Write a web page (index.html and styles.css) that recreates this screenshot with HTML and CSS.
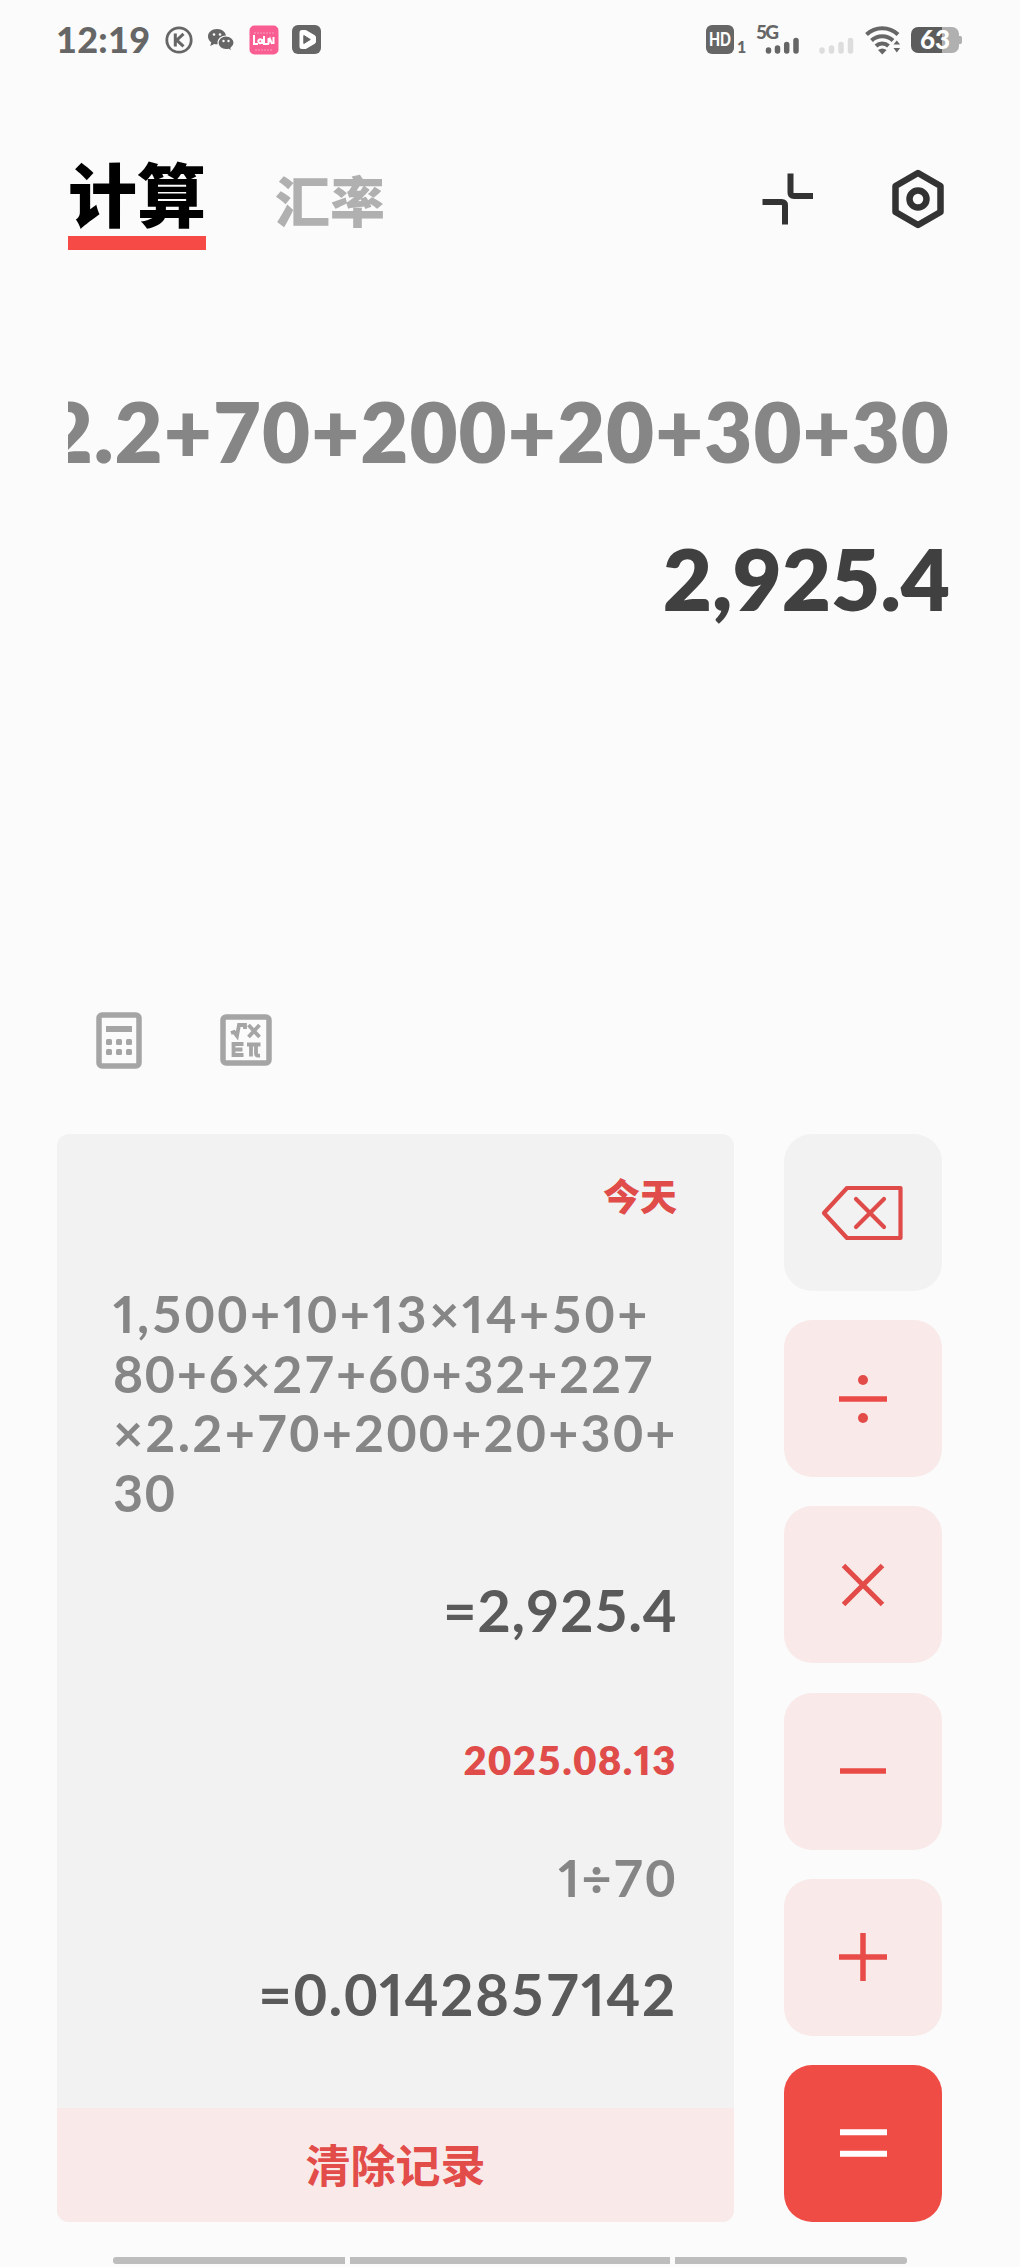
FILE: index.html
```html
<!DOCTYPE html>
<html lang="zh-CN">
<head>
  <meta charset="UTF-8">
  <title>计算</title>
  <link rel="stylesheet" href="styles.css">
</head>
<body>

  <div class="status">
    <span class="time">12:19</span>
    <svg class="icon-k" width="28" height="28" viewBox="0 0 28 28">
      <circle cx="14" cy="14" r="12.2" fill="none" stroke="#666" stroke-width="2.8"/>
      <path d="M10.3 7.5v13M18.5 7.8l-6.8 6.4 6.8 6.2" fill="none" stroke="#666" stroke-width="3"/>
    </svg>
    <svg class="icon-chat" width="28" height="28" viewBox="0 0 28 28">
      <path d="M10 3C4.800 3 1 6.300 1 10.500c0 2.400 1.300 4.400 3.200 5.800L3.300 20l4-2.100c.9.2 1.800.3 2.700.3C15.500 18 19 14.700 19 10.500S15.200 3 10 3z" fill="#666"/>
      <path d="M19 10c-4.500 0-8 3-8 6.800s3.500 6.800 8 6.800c.9 0 1.700-.1 2.500-.3l3.200 1.900-.8-3c1.900-1.300 3.200-3.200 3.200-5.400C27.100 13 23.500 10 19 10z" fill="#666" stroke="#fbfbfb" stroke-width="1.200"/>
      <g fill="#fbfbfb">
        <circle cx="7" cy="8.500" r="1.300"/><circle cx="13" cy="8.500" r="1.300"/>
        <circle cx="16.500" cy="15" r="1.200"/><circle cx="21.500" cy="15" r="1.200"/>
      </g>
    </svg>
    <svg class="icon-pink" width="30" height="30" viewBox="0 0 30 30">
      <rect x=".5" y=".5" width="29" height="29" rx="5" fill="#f95d92"/>
      <path d="M5 8h20M6 25h18" stroke="#fc9dbd" stroke-width="1.200" stroke-dasharray="2 1"/>
      <path d="M5 10v9h4M9.500 15.500a1.800 1.800 0 1 0 3.500 1.500 1.800 1.800 0 1 0-3.500-1.500M13.500 14v5M15 11v8h4l2-5 2 5M19.500 13v6M24.500 12v7" fill="none" stroke="#fff" stroke-width="2"/>
    </svg>
    <svg class="icon-play" width="29" height="29" viewBox="0 0 29 29">
      <rect width="29" height="29" rx="6" fill="#666"/>
      <path d="M10 7.500h3l8.500 5v4l-8.500 5h-3z" fill="#fff" stroke="#fff" stroke-width="5" stroke-linejoin="round"/>
      <path d="M11.800 10.500v8l6.500-4z" fill="#666" stroke="#666" stroke-linejoin="round"/>
    </svg>

    <div class="status-right">
      <svg width="38" height="30" viewBox="0 0 38 30">
        <rect width="28" height="29" rx="6" fill="#666"/>
        <text class="hd" x="14" y="20.500" text-anchor="middle" textLength="22" lengthAdjust="spacingAndGlyphs">HD</text>
        <text class="sim" x="31" y="28">1</text>
      </svg>
      <svg class="icon-5g" width="43" height="30" viewBox="0 0 43 30">
        <text class="net" x="-1" y="14" textLength="23">5G</text>
        <path d="M11.500 25v1M20.500 23v3M29.700 19.500v6.500M39 15.500v10.500" stroke="#666" stroke-width="5.500" stroke-linecap="round"/>
      </svg>
      <svg class="icon-nosim" width="35" height="30" viewBox="0 0 35 30">
        <path d="M3 25v1M12.500 23v3M22 19.500v6.500M31.500 15.500v10.500" stroke="#ddd" stroke-width="5.500" stroke-linecap="round"/>
      </svg>
      <svg class="icon-wifi" width="36" height="30" viewBox="0 0 36 30">
        <g fill="none" stroke="#666" stroke-width="4">
          <path d="M1.500 9.500a23 23 0 0 1 31.500 0"/>
          <path d="M6.500 15.500a15.500 15.500 0 0 1 21.500 0"/>
          <path d="M11 21a9 9 0 0 1 12.500 0"/>
        </g>
        <path d="M13 25q4.300-3 8.600 0l-4.300 4.500z" fill="#666"/>
        <path d="M28.500 19.500l3.300-4 3.300 4zM28.500 23l3.300 4.500 3.300-4.500z" fill="#666"/>
      </svg>
      <svg class="icon-battery" width="51" height="26" viewBox="0 0 51 26">
        <path d="M7 0h24v26H7a7 7 0 0 1-7-7V7a7 7 0 0 1 7-7z" fill="#5c5c5c"/>
        <path d="M31 0h10a7 7 0 0 1 7 7v2h1.500q1.500 0 1.500 2v4q0 2-1.500 2H48v2a7 7 0 0 1-7 7H31z" fill="#b0b0b0"/>
        <text class="level" x="24" y="22" text-anchor="middle">63</text>
      </svg>
    </div>
  </div>

  <div class="header">
    <div class="tab active">计算</div>
    <div class="tab">汇率</div>
    <svg class="shrink" width="52" height="52" viewBox="0 0 52 52" fill="none" stroke="#333" stroke-width="6">
      <path d="M28.500.5v19q0 3.500 3.500 3.500h19M.5 29h19q3.500 0 3.500 3.500v19"/>
    </svg>
    <svg class="gear" width="54" height="60" viewBox="0 0 54 60" fill="none" stroke="#333" stroke-width="6.500" stroke-linejoin="round">
      <path d="M27 4l22.500 13v26L27 56 4.500 43V17z"/>
      <circle cx="27" cy="30" r="8.500"/>
    </svg>
  </div>

  <div class="display">
    <div class="expression"><span>×2.2+70+200+20+30+30</span></div>
    <div class="result">2,925.4</div>
  </div>

  <div class="modes">
    <svg width="46" height="57" viewBox="0 0 46 57">
      <rect x="3" y="3" width="40" height="51" rx="3" fill="none" stroke="#a5a5a5" stroke-width="5.500"/>
      <path d="M10 17h26" stroke="#a5a5a5" stroke-width="6"/>
      <g fill="#a5a5a5">
        <rect x="10" y="27" width="6" height="6" rx="1.500"/><rect x="20" y="27" width="6" height="6" rx="1.500"/><rect x="30" y="27" width="6" height="6" rx="1.500"/>
        <rect x="10" y="37" width="6" height="6" rx="1.500"/><rect x="20" y="37" width="6" height="6" rx="1.500"/><rect x="30" y="37" width="6" height="6" rx="1.500"/>
      </g>
    </svg>
    <svg width="52" height="52" viewBox="0 0 52 52" fill="none" stroke="#a5a5a5">
      <rect x="3" y="3" width="46" height="46" rx="3" stroke-width="5.500"/>
      <path d="M11 19l3-1 3 4 2-11h6v4M28.500 11l11 12M39.500 11l-11 12M23.500 30H13.500v11h10M13.500 35.500h9M27 30.500h13.500M31 31v11.500M36 31v9q0 2 4 1.500" stroke-width="3.800"/>
    </svg>
  </div>

  <div class="pad">
    <div class="history">
      <div class="records">
        <div class="date today">今天</div>
        <div class="exp long">
          <div class="line1"><b>1</b>,500+<b>1</b>0+<b>1</b>3×<b>1</b>4+50+</div>
          <div>80+6×27+60+32+227</div>
          <div class="line3">×2.2+70+200+20+30+</div>
          <div>30</div>
        </div>
        <div class="ans first">=2,925.4</div>
        <div class="date day">2025.08.<b>1</b>3</div>
        <div class="exp short"><b>1</b>÷70</div>
        <div class="ans last">=0.0<b>1</b>42857<b>1</b>42</div>
      </div>
      <div class="clear">清除记录</div>
    </div>

    <div class="keys">
      <div class="key del">
        <svg width="82" height="56" viewBox="0 0 82 56" fill="none" stroke="#de4b48" stroke-width="4.200" stroke-linejoin="round" stroke-linecap="round">
          <path d="M26 3h53.500v50H26L3 28z"/>
          <path d="M35 14l28 28M63 14L35 42"/>
        </svg>
      </div>
      <div class="key">
        <svg width="48" height="50" viewBox="0 0 48 50">
          <path d="M0 25h48" stroke="#ea4a46" stroke-width="5.500"/>
          <circle cx="24" cy="6" r="5" fill="#e24b48"/><circle cx="24" cy="44" r="5" fill="#e24b48"/>
        </svg>
      </div>
      <div class="key">
        <svg width="42" height="42" viewBox="0 0 42 42"><path d="M1.500 1.500l39 39M40.500 1.500l-39 39" stroke="#e24b48" stroke-width="5"/></svg>
      </div>
      <div class="key">
        <svg width="46" height="6" viewBox="0 0 46 6"><path d="M0 3h46" stroke="#ea4a46" stroke-width="5.500"/></svg>
      </div>
      <div class="key">
        <svg width="48" height="48" viewBox="0 0 48 48"><path d="M0 24h48M24 0v48" stroke="#e84b48" stroke-width="5.500"/></svg>
      </div>
      <div class="key equals">
        <svg width="47" height="28" viewBox="0 0 47 28"><path d="M0 3.200h47M0 24.800h47" stroke="#fff" stroke-width="6"/></svg>
      </div>
    </div>
  </div>

  <div class="navbar">
    <i class="side left"></i><i class="mid"></i><i class="side right"></i>
  </div>

</body>
</html>
```
FILE: styles.css
```css
* {
  box-sizing: border-box;
}
body {
  margin: 0;
  width: 1020px;
  height: 2267px;
  overflow: hidden;
  background: #fbfbfb;
  font-family: Lato, "Noto Sans CJK SC", sans-serif;
  font-feature-settings: "tnum";
}
svg {
  display: block;
  flex: none;
  overflow: visible;
}
/* narrow ones */
b {
  font-weight: inherit;
  font-feature-settings: "pnum";
}

/* status bar */
.status {
  display: flex;
  align-items: center;
  height: 79px;
  padding: 0 58px 0 56px;
}
.time {
  width: 109px;
  font-size: 36px;
  font-weight: 900;
  line-height: 40px;
  padding-bottom: 1px;
  letter-spacing: .3px;
  color: #666;
}
.icon-chat {
  margin-left: 14px;
}
.icon-pink {
  margin-left: 14px;
}
.icon-play {
  margin-left: 13px;
}
.status-right {
  display: flex;
  align-items: center;
  margin-left: auto;
}
.hd {
  font-size: 18px;
  font-weight: 900;
  fill: #fff;
}
.sim {
  font-size: 16px;
  font-weight: 900;
  fill: #666;
}
.net {
  font-size: 19px;
  font-weight: 900;
  fill: #666;
}
.level {
  font-size: 26px;
  font-weight: 900;
  fill: #fff;
}
.icon-5g {
  margin-left: 13px;
}
.icon-nosim {
  margin-left: 19px;
}
.icon-wifi {
  margin-left: 11px;
}
.icon-battery {
  margin-left: 10px;
}

/* tabs */
.header {
  display: flex;
  height: 171px;
  padding: 0 75px 0 68px;
}
.tab {
  margin: 86px 0 0 69px;
  height: 72px;
  line-height: 72px;
  font-size: 55px;
  font-weight: 900;
  color: #b0b0b0;
}
.tab.active {
  width: 138px;
  height: 96px;
  margin: 75px 0 0;
  border-bottom: 14px solid #f54a46;
  line-height: 83px;
  font-size: 69px;
  text-align: center;
  color: #000;
}
.shrink {
  margin: 94px 0 0 auto;
}
.gear {
  margin: 90px 0 0 77px;
}

/* display */
.display {
  height: 760px;
  padding: 132px 70px 0 68px;
  font-weight: 800;
  font-size: 83px;
}
.expression {
  display: flex;
  justify-content: flex-end;
  overflow: hidden;
  height: 100px;
  line-height: 99px;
  letter-spacing: 1px;
  white-space: nowrap;
  color: #868686;
}
.result {
  margin-top: 47px;
  height: 100px;
  line-height: 99px;
  text-align: right;
  font-size: 85px;
  color: #404040;
}
.modes {
  display: flex;
  align-items: center;
  gap: 78px;
  height: 60px;
  padding-left: 96px;
}

/* history and keys */
.pad {
  display: flex;
  justify-content: space-between;
  margin-top: 64px;
  padding: 0 78px 0 57px;
  height: 1088px;
}
.history {
  width: 677px;
  border-radius: 12px;
  overflow: hidden;
  background: #f2f2f2;
}
.records {
  height: 974px;
  padding: 33px 57px 0 56px;
  text-align: right;
}
.date {
  color: #e04c49;
  font-weight: 800;
}
.today {
  height: 60px;
  line-height: 60px;
  font-size: 37px;
}
.exp {
  font-size: 52px;
  line-height: 60px;
  font-weight: 700;
  letter-spacing: 1.700px;
  color: #868686;
}
.long {
  margin-top: 57px;
  height: 238px;
  line-height: 59.600px;
  text-align: left;
  white-space: nowrap;
}
.line1 {
  letter-spacing: 2.600px;
}
.line3 {
  letter-spacing: 2.200px;
}
.ans {
  height: 80px;
  line-height: 80px;
  font-size: 58px;
  font-weight: 700;
  color: #5a5a5a;
}
.first {
  margin-top: 48px;
  letter-spacing: .600px;
}
.day {
  margin-top: 80px;
  height: 60px;
  line-height: 60px;
  font-size: 40px;
  letter-spacing: 1.500px;
}
.short {
  margin-top: 57px;
}
.last {
  margin-top: 47px;
  letter-spacing: 1.600px;
}
.clear {
  height: 114px;
  line-height: 116px;
  text-align: center;
  font-size: 45px;
  font-weight: 700;
  color: #e24c49;
  background: #f9e9e9;
}
.keys {
  display: flex;
  flex-direction: column;
  justify-content: space-between;
}
.key {
  display: flex;
  align-items: center;
  justify-content: center;
  width: 158px;
  height: 157px;
  border-radius: 28px;
  background: #f9e9e9;
}
.key.del {
  padding-right: 3px;
  background: #f2f2f2;
}
.key.equals {
  background: #f04c46;
}

/* bottom handle */
.navbar {
  display: flex;
  gap: 5px;
  margin-top: 35px;
  padding: 0 113px;
}
.navbar i {
  height: 7px;
  background: #bdbdbd;
}
.side {
  width: 232px;
}
.mid {
  flex: 1;
}
.left {
  border-radius: 3px 0 0 3px;
}
.right {
  border-radius: 0 3px 3px 0;
}
```
